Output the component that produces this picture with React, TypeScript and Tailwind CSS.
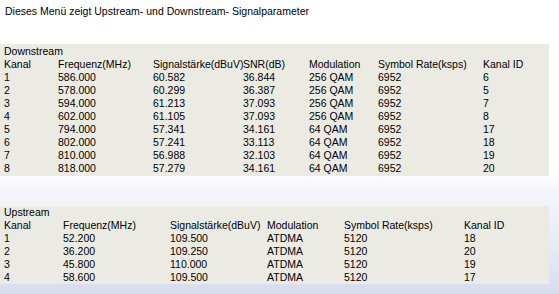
const downstream = [
  ['1', '586.000', '60.582', '36.844', '256 QAM', '6952', '6'],
  ['2', '578.000', '60.299', '36.387', '256 QAM', '6952', '5'],
  ['3', '594.000', '61.213', '37.093', '256 QAM', '6952', '7'],
  ['4', '602.000', '61.105', '37.093', '256 QAM', '6952', '8'],
  ['5', '794.000', '57.341', '34.161', '64 QAM', '6952', '17'],
  ['6', '802.000', '57.241', '33.113', '64 QAM', '6952', '18'],
  ['7', '810.000', '56.988', '32.103', '64 QAM', '6952', '19'],
  ['8', '818.000', '57.279', '34.161', '64 QAM', '6952', '20'],
];

const upstream = [
  ['1', '52.200', '109.500', 'ATDMA', '5120', '18'],
  ['2', '36.200', '109.250', 'ATDMA', '5120', '20'],
  ['3', '45.800', '110.000', 'ATDMA', '5120', '19'],
  ['4', '58.600', '109.500', 'ATDMA', '5120', '17'],
];

const dsHead = ['Kanal', 'Frequenz(MHz)', 'Signalstärke(dBuV)', 'SNR(dB)', 'Modulation', 'Symbol Rate(ksps)', 'Kanal ID'];
const usHead = ['Kanal', 'Frequenz(MHz)', 'Signalstärke(dBuV)', 'Modulation', 'Symbol Rate(ksps)', 'Kanal ID'];

const dsGrid = 'grid grid-cols-[54px_95px_90px_66px_69px_105px_1fr]';
const usGrid = 'grid grid-cols-[59px_107px_97px_77px_120px_1fr]';

const Row = ({ cells, grid }: { cells: string[]; grid: string }) => (
  <div className={grid}>
    {cells.map((c, i) => (
      <span key={i} className="whitespace-nowrap">{c}</span>
    ))}
  </div>
);

export default function App() {
  return (
    <div
      className="w-[559px] h-[294px] overflow-hidden bg-[linear-gradient(180deg,#ffffff_0%,#ffffff_58%,#f4f5fa_66%,#e6eaf6_85%,#d6dcef_100%)] text-[10.5px] leading-[13px] text-black"
      style={{ fontFamily: '"Liberation Sans", Arial, sans-serif' }}
    >
      <div className="pl-[5px] pt-[5px] h-[44px]">Dieses Menü zeigt Upstream- und Downstream- Signalparameter</div>

      <div className="w-[549px] bg-[#ebebe3] pl-[4px] pt-[1px] pb-[1px]">
        <div>Downstream</div>
        <Row cells={dsHead} grid={dsGrid} />
        {downstream.map((r) => (
          <Row key={r[0]} cells={r} grid={dsGrid} />
        ))}
      </div>

      <div className="w-[549px] mt-[30px] bg-[#ebebe3] pl-[4px]">
        <div>Upstream</div>
        <Row cells={usHead} grid={usGrid} />
        {upstream.map((r) => (
          <Row key={r[0]} cells={r} grid={usGrid} />
        ))}
      </div>
    </div>
  );
}
